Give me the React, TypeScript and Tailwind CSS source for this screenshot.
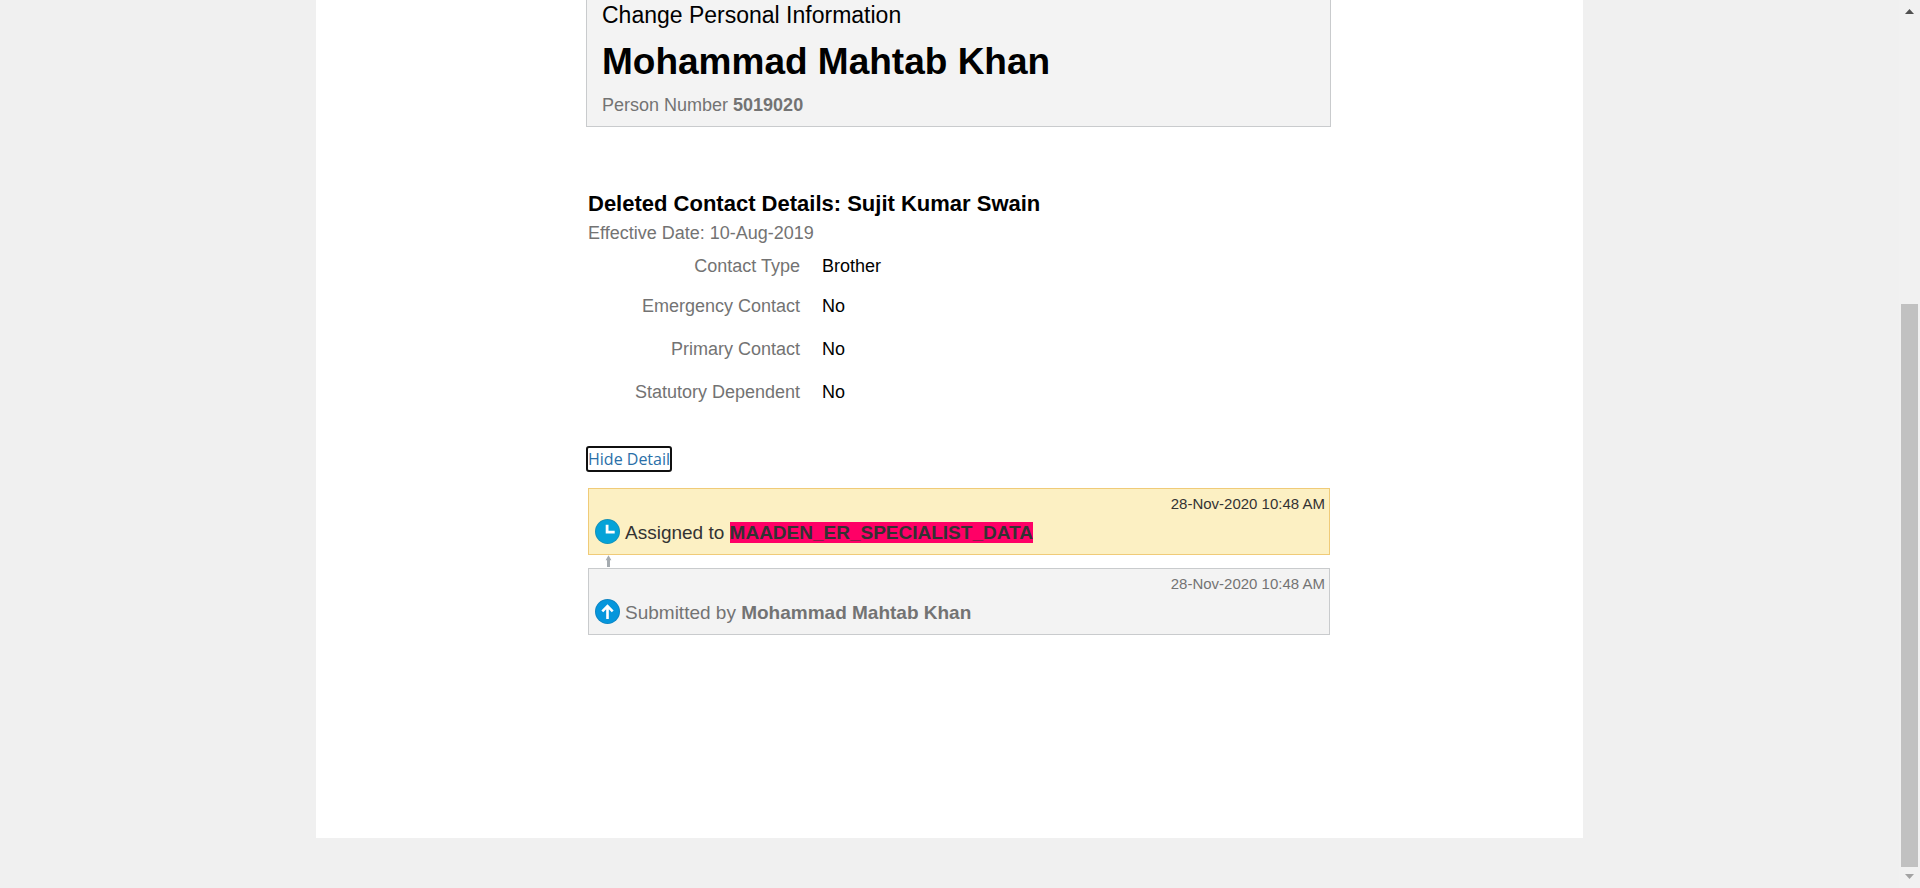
import type { ReactNode } from "react";

const contactDetails = [
  { label: "Contact Type", value: "Brother", row: "leading-[38px]" },
  { label: "Emergency Contact", value: "No", row: "leading-[43px]" },
  { label: "Primary Contact", value: "No", row: "leading-[43px]" },
  { label: "Statutory Dependent", value: "No", row: "leading-[43px]" },
];

function ClockIcon() {
  return (
    <svg className="size-[25px] shrink-0" viewBox="0 0 25 25" aria-hidden="true">
      <circle cx="12.5" cy="12.5" r="12.5" fill="#1591b8" />
      <circle cx="12.5" cy="12.5" r="11.5" fill="#05a3d8" />
      <path d="M12.1 5.8v7.3h7.6" fill="none" stroke="#fff" strokeWidth="2.8" />
    </svg>
  );
}

function SubmittedIcon() {
  return (
    <svg className="size-[25px] shrink-0" viewBox="0 0 25 25" aria-hidden="true">
      <circle cx="12.5" cy="12.5" r="12.5" fill="#0d84c2" />
      <circle cx="12.5" cy="12.5" r="11.5" fill="#0596dc" />
      <path d="M12.5 20V7.5M7.3 12.4l5.2-5.4 5.2 5.4" fill="none" stroke="#fff" strokeWidth="2.6" />
    </svg>
  );
}

function StepArrow() {
  return (
    <svg className="ml-[16px] h-[13px] w-[9px]" viewBox="0 0 9 13" aria-hidden="true">
      <path d="M4.5 0.3L7.4 5.2H6V12H3V5.2H1.6Z" fill="#a5abb0" />
    </svg>
  );
}

function HistoryEntry({ tone, icon, date, children }: { tone: string; icon: ReactNode; date: string; children: ReactNode }) {
  return (
    <li className={`border pb-2 ${tone}`}>
      <time className="block pr-[4px] text-right text-[15px] leading-[30px]">{date}</time>
      <div className="flex items-start gap-[5px] pl-[6px] text-[19px] leading-[27px]">
        {icon}
        <p>{children}</p>
      </div>
    </li>
  );
}

function ScrollBar() {
  return (
    <div className="flex w-[21px] shrink-0 flex-col items-center bg-[#f1f1f1]" aria-hidden="true">
      <svg className="h-[21px] w-[17px]" viewBox="0 0 17 21">
        <path d="M8.5 9L13 14H4Z" fill="#505050" />
      </svg>
      <div className="grow-283" />
      <div className="w-[17px] grow-563 bg-[#c1c1c1]" />
      <svg className="h-[21px] w-[17px]" viewBox="0 0 17 21">
        <path d="M8.5 12L4 7H13Z" fill="#a3a3a3" />
      </svg>
    </div>
  );
}

export default function App() {
  return (
    <div className="flex min-h-screen bg-[#f0f0f0] font-['Liberation_Sans',Arial,sans-serif] text-black">
      <div className="flex grow flex-col px-[316px] pb-[50px]">
        <main className="grow bg-white pr-[252px] pl-[270px]">
          <header className="border border-t-0 border-[#c9cbcd] bg-[#f3f3f3] px-[15px] pb-2">
            <p className="text-[23px] leading-[30px]">Change Personal Information</p>
            <h1 className="text-[37px] leading-[63px] font-bold">Mohammad Mahtab Khan</h1>
            <p className="text-[18px] leading-[25px] text-[#737373]">
              Person Number <b>5019020</b>
            </p>
          </header>

          <section className="mt-[62px] pr-px pl-[2px]">
            <h2 className="text-[22px] leading-[30px] font-bold">Deleted Contact Details: Sujit Kumar Swain</h2>
            <p className="text-[18px] leading-[28px] text-[#737373]">Effective Date: 10-Aug-2019</p>
            <dl className="text-[18px]">
              {contactDetails.map(({ label, value, row }) => (
                <div key={label} className={`flex gap-[22px] ${row}`}>
                  <dt className="w-[212px] text-right text-[#737373]">{label}</dt>
                  <dd>{value}</dd>
                </div>
              ))}
            </dl>
          </section>

          <section className="mt-[34px] pr-px pl-[2px]">
            <button
              type="button"
              className="block rounded-[1px] font-['Open_Sans',sans-serif] text-[16px] leading-[22px] text-[#2a6fa8] outline-2 outline-[#101010]"
            >
              Hide Detail
            </button>
            <ol className="mt-[18px]">
              <HistoryEntry tone="border-[#f0cb78] bg-[#fcf0c3] text-[#333333]" icon={<ClockIcon />} date="28-Nov-2020 10:48 AM">
                Assigned to <b className="bg-[#ff0066]">MAADEN_ER_SPECIALIST_DATA</b>
              </HistoryEntry>
              <li>
                <StepArrow />
              </li>
              <HistoryEntry tone="border-[#c9cbcd] bg-[#f3f3f3] text-[#737373]" icon={<SubmittedIcon />} date="28-Nov-2020 10:48 AM">
                Submitted by <b>Mohammad Mahtab Khan</b>
              </HistoryEntry>
            </ol>
          </section>
        </main>
      </div>
      <ScrollBar />
    </div>
  );
}
